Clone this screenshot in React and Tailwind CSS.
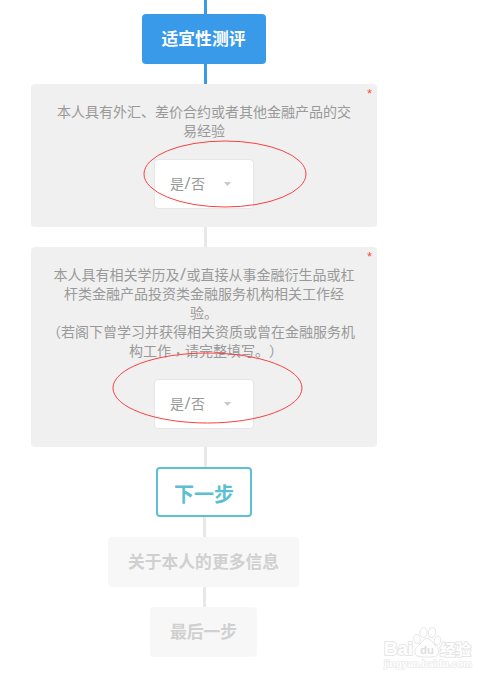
const CARD_LINES = {
  trading: [
    { text: '本人具有外汇、差价合约或者其他金融产品的交', className: '' },
    { text: '易经验', className: '' },
  ],
  background: [
    { text: '本人具有相关学历及/或直接从事金融衍生品或杠', className: '' },
    { text: '杆类金融产品投资类金融服务机构相关工作经', className: '' },
    { text: '验。', className: '' },
    { text: '（若阁下曾学习并获得相关资质或曾在金融服务机', className: '-ml-[6px]' },
    { text: '构工作，请完整填写。）', className: 'ml-[4px]' },
  ],
};

export default function App() {
  return (
    <div className="relative w-[501px] h-[681px] overflow-hidden bg-white font-['Liberation_Sans','Noto_Sans_CJK_SC',sans-serif]">
      <div className="ml-[31px] w-[346px] flex flex-col items-center">
        <Connector className="h-[14px] ml-[3px] bg-[#389ae8]" />
        <div className="h-[50px] w-[124px] rounded bg-[#389ae8] text-white font-bold text-[16.8px] flex items-center justify-center pt-[2px] pr-px">
          适宜性测评
        </div>
        <Connector className="h-5 ml-[3px] bg-[#389ae8]" />

        <QuestionCard lines={CARD_LINES.trading} className="h-[143px]">
          <svg className="absolute left-[112px] top-[56px] w-[164px] h-[68px]" viewBox="0 0 164 68" fill="none">
            <ellipse cx="82" cy="34" rx="81" ry="33" stroke="#fb4040" />
          </svg>
        </QuestionCard>
        <Connector className="h-5 ml-[3px] bg-[#e8e8e8]" />

        <QuestionCard lines={CARD_LINES.background} className="h-[200px]">
          <svg className="absolute left-[81px] top-[105px] w-[191px] h-[72px]" viewBox="0 0 191 72" fill="none">
            <ellipse cx="95.5" cy="36" rx="94.5" ry="35" stroke="#fb4040" />
          </svg>
        </QuestionCard>
        <Connector className="h-5 ml-[3px] bg-[#e8e8e8]" />

        <button className="h-[50px] w-24 rounded border-2 border-[#5bc0d2] text-[#5bc0d2] font-bold text-xl flex items-center justify-center pt-1.5">
          下一步
        </button>
        <Connector className="h-5 ml-px bg-[#e8e8e8]" />
        <div className="h-[50px] w-[191px] mr-px rounded bg-[#f7f7f7] text-[#d0d0d0] font-bold text-[16.8px] flex items-center justify-center pt-[2px]">
          关于本人的更多信息
        </div>
        <Connector className="h-5 ml-px bg-[#e8e8e8]" />
        <div className="h-[50px] w-[107px] mr-px rounded bg-[#f7f7f7] text-[#d0d0d0] font-bold text-[16.8px] flex items-center justify-center pt-[2px]">
          最后一步
        </div>
      </div>

      <Watermark />
    </div>
  );
}

/* ─── Components ─── */

function Connector({ className }) {
  return <div className={`w-[3px] shrink-0 ${className}`} />;
}

function QuestionCard({ lines, className, children }) {
  return (
    <div className={`relative w-full rounded bg-[#f0f0f0] pt-[19px] flex flex-col items-center ${className}`}>
      <span className="absolute right-[5px] top-[3px] text-[13px] leading-[14px] text-[#ff5038]">*</span>
      <div className="text-sm leading-[19px] text-[#999] text-center whitespace-nowrap [text-spacing-trim:space-all]">
        {lines.map(line => (
          <p key={line.text} className={line.className}><Spaced text={line.text} /></p>
        ))}
      </div>
      <div className="mt-[18px] h-[50px] w-[100px] shrink-0 rounded border border-[#e6e6e6] bg-white flex items-center pl-[15px] text-sm text-[#999]">
        <span className="w-[54px]"><Spaced text="是/否" /></span>
        <svg className="w-[7px] h-1" viewBox="0 0 7 4"><path d="M0 0h7L3.5 4z" fill="#c8c8c8" /></svg>
      </div>
      {children}
    </div>
  );
}

// Wider slash, and brackets and commas centred in their cell
function Spaced({ text }) {
  return text.split(/([/（），])/).map((part, i) => {
    if (part === '/') {
      return <span key={i} className="px-[0.5px] text-[16px] leading-none font-['Noto_Sans',sans-serif]">/</span>;
    }
    if (part === '，') {
      return <span key={i} lang="zh-TW" className="relative top-[3px] leading-none font-['Noto_Sans_CJK_TC',sans-serif]">{part}</span>;
    }
    if (part === '（' || part === '）') {
      return <span key={i} lang="zh-TW" className="leading-none font-['Noto_Sans_CJK_TC',sans-serif]">{part}</span>;
    }
    return part;
  });
}

function Watermark() {
  return (
    <div className="absolute left-[383px] top-[626px] w-[92px] h-[46px]">
      <svg className="w-full h-full" viewBox="0 0 92 46" fill="#fff" stroke="#e6e6e6" strokeWidth="1">
        <ellipse cx="34" cy="13" rx="3.2" ry="4.5" transform="rotate(-10 34 13)" />
        <ellipse cx="40.5" cy="6.5" rx="3.5" ry="5" />
        <ellipse cx="49" cy="6.5" rx="3.5" ry="5" transform="rotate(8 49 6.5)" />
        <ellipse cx="54.5" cy="14.5" rx="3.2" ry="4.5" transform="rotate(15 54.5 14.5)" />
        <path d="M44 12.5c-3.500 0-4.500 3-7 5.500s-5.500 4-5 8.500 4.500 4.500 12 4.500 11 0 11.500-4.500-2-6-4.500-8.500-3.500-5.500-7-5.500z" />
        <g fontFamily="Liberation Sans, Noto Sans CJK SC, sans-serif" fontWeight="bold" paintOrder="stroke" strokeWidth="2" strokeLinejoin="round">
          <text x="1" y="28.5" fontSize="19" textLength="29" lengthAdjust="spacingAndGlyphs">Bai</text>
          <text x="37" y="27.5" fontSize="11.5" fill="#dedede" stroke="none" textLength="14" lengthAdjust="spacingAndGlyphs">du</text>
          <text x="57" y="28.5" fontSize="15" textLength="31" lengthAdjust="spacingAndGlyphs">经验</text>
          <text x="1" y="41" fontSize="9.5" textLength="88" lengthAdjust="spacingAndGlyphs" stroke="#ebebeb" strokeWidth="1.5">jingyan.baidu.com</text>
        </g>
      </svg>
    </div>
  );
}
